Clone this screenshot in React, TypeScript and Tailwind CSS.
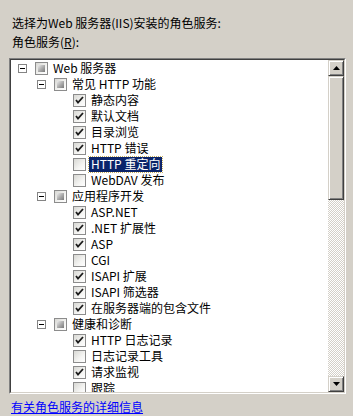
import React from "react";

type Item = { label: string; level: number; state: "checked" | "unchecked" | "partial"; expander?: boolean; selected?: boolean };

const ITEMS: Item[] = [
  { label: "Web 服务器", level: 0, state: "partial", expander: true },
  { label: "常见 HTTP 功能", level: 1, state: "partial", expander: true },
  { label: "静态内容", level: 2, state: "checked" },
  { label: "默认文档", level: 2, state: "checked" },
  { label: "目录浏览", level: 2, state: "checked" },
  { label: "HTTP 错误", level: 2, state: "checked" },
  { label: "HTTP 重定向", level: 2, state: "unchecked", selected: true },
  { label: "WebDAV 发布", level: 2, state: "unchecked" },
  { label: "应用程序开发", level: 1, state: "partial", expander: true },
  { label: "ASP.NET", level: 2, state: "checked" },
  { label: ".NET 扩展性", level: 2, state: "checked" },
  { label: "ASP", level: 2, state: "checked" },
  { label: "CGI", level: 2, state: "unchecked" },
  { label: "ISAPI 扩展", level: 2, state: "checked" },
  { label: "ISAPI 筛选器", level: 2, state: "checked" },
  { label: "在服务器端的包含文件", level: 2, state: "checked" },
  { label: "健康和诊断", level: 1, state: "partial", expander: true },
  { label: "HTTP 日志记录", level: 2, state: "checked" },
  { label: "日志记录工具", level: 2, state: "unchecked" },
  { label: "请求监视", level: 2, state: "checked" },
  { label: "跟踪", level: 2, state: "unchecked" },
];

const indent = ["pl-[7px]", "pl-[26px]", "pl-[45px]"];

function Expander({ show }: { show?: boolean }) {
  if (!show) return <span className="w-[9px] h-[9px] mr-[8px] shrink-0" />;
  return (
    <span className="w-[9px] h-[9px] mr-[8px] shrink-0 border border-[#848484] bg-white flex items-center justify-center">
      <span className="w-[5px] h-px bg-black" />
    </span>
  );
}

function Check({ state }: { state: Item["state"] }) {
  return (
    <span className="relative w-[13px] h-[13px] shrink-0 border border-[#8c8c8c] bg-[linear-gradient(135deg,#d8d8d4_0%,#f4f4f2_60%,#ffffff_100%)] flex items-center justify-center">
      {state === "checked" && (
        <svg width="11" height="11" viewBox="0 0 11 11">
          <path d="M2 5 L4 7.5 L9 2" fill="none" stroke="#1b1b1b" strokeWidth="1.8" />
        </svg>
      )}
      {state === "partial" && (
        <span className="w-[7px] h-[7px] bg-[linear-gradient(135deg,#ececec_0%,#a8a8a8_55%,#7a7a7a_100%)]" />
      )}
    </span>
  );
}

function Row({ item }: { item: Item }) {
  return (
    <div className={`flex items-center h-4 ${indent[item.level]}`}>
      <Expander show={item.expander} />
      <Check state={item.state} />
      <span
        className={`ml-[3px] px-[2px] h-[15px] leading-[14px] whitespace-nowrap ${
          item.selected ? "bg-[#0a246a] text-white outline-1 outline-dotted outline-[#c8b060]" : "text-black"
        }`}
      >
        {item.label}
      </span>
    </div>
  );
}

function ScrollButton({ up }: { up?: boolean }) {
  return (
    <div className="w-4 h-4 shrink-0 bg-[#d4d0c8] border border-t-[#d4d0c8] border-l-[#d4d0c8] border-r-[#404040] border-b-[#404040] shadow-[inset_1px_1px_0_#ffffff,inset_-1px_-1px_0_#808080] flex items-center justify-center">
      <svg width="7" height="4" viewBox="0 0 7 4">
        {up ? <path d="M3.5 0 L7 4 L0 4 Z" fill="#000" /> : <path d="M0 0 L7 0 L3.5 4 Z" fill="#000" />}
      </svg>
    </div>
  );
}

export default function App() {
  return (
    <div
      className="w-[353px] h-[416px] bg-[#d4d0c8] text-[12px] text-black overflow-hidden pt-[15px]"
      style={{ fontFamily: '"Noto Sans CJK SC", "Noto Sans", sans-serif' }}
    >
      <div className="pl-[12px] leading-4 h-4">选择为Web 服务器(IIS)安装的角色服务:</div>
      <div className="pl-[12px] leading-4 h-4 mt-[3px]">
        角色服务(<span className="underline">R</span>):
      </div>

      <div className="ml-[9px] mt-[8px] w-[337px] h-[336px] border border-t-[#808080] border-l-[#808080] border-r-white border-b-white">
        <div className="h-full flex border border-t-[#404040] border-l-[#404040] border-r-[#d4d0c8] border-b-[#d4d0c8] bg-white">
          <div className="flex-1 overflow-hidden">
            {ITEMS.map((it) => (
              <Row key={it.label} item={it} />
            ))}
          </div>
          <div className="w-4 flex flex-col">
            <ScrollButton up />
            <div className="h-[124px] shrink-0 bg-[#d4d0c8] border border-t-[#d4d0c8] border-l-[#d4d0c8] border-r-[#404040] border-b-[#404040] shadow-[inset_1px_1px_0_#ffffff,inset_-1px_-1px_0_#808080]" />
            <div className="flex-1 bg-[repeating-conic-gradient(#d4d0c8_0%_25%,#ffffff_0%_50%)] bg-size-[2px_2px]" />
            <ScrollButton />
          </div>
        </div>
      </div>

      <div className="pl-[11px] mt-[5px] leading-4 h-4">
        <span className="text-[#0000ff] underline">有关角色服务的详细信息</span>
      </div>
    </div>
  );
}
